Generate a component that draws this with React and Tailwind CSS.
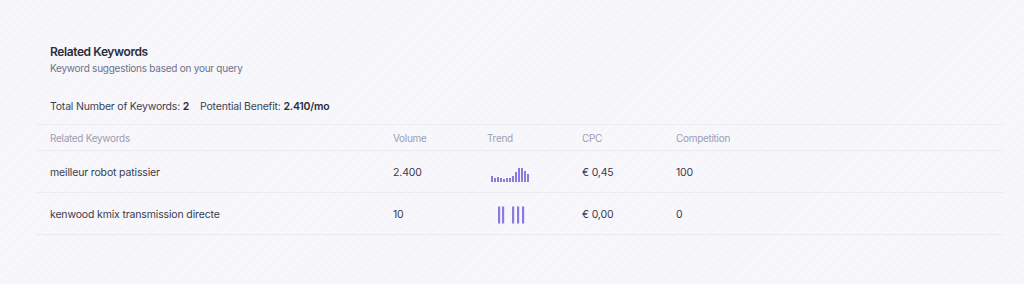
import React from "react";

const rows = [
  {
    kw: "meilleur robot patissier",
    volume: "2.400",
    cpc: "€ 0,45",
    comp: "100",
    trend: "a",
  },
  {
    kw: "kenwood kmix transmission directe",
    volume: "10",
    cpc: "€ 0,00",
    comp: "0",
    trend: "b",
  },
];

function TrendA() {
  const h = [6, 4, 5, 4, 3, 4, 4, 6, 10, 14, 14, 11, 8];
  return (
    <svg width="42" height="16" viewBox="0 0 42 16" className="block">
      {h.map((v, i) => (
        <rect key={i} x={i * 3} y={16 - v} width="2" height={v} fill="#8a7bdc" />
      ))}
    </svg>
  );
}

function TrendB() {
  const xs = [0, 4, 14, 19, 24];
  return (
    <svg width="28" height="18" viewBox="0 0 28 18" className="block">
      {xs.map((x, i) => (
        <rect key={i} x={x} y="0.5" width="2.2" height="17" fill="#8a7bdc" />
      ))}
    </svg>
  );
}

export default function App() {
  return (
    <div
      className="w-[1024px] h-[284px] bg-[repeating-linear-gradient(135deg,#f5f5fa_0px,#f5f5fa_3px,#f8f8fc_3px,#f8f8fc_6px)] pl-[36px] pr-[21px] pt-[43px]"
      style={{ fontFamily: "Inter, 'Noto Sans', sans-serif" }}
    >
      <div className="pl-[14px]">
        <h2 className="text-[12px] leading-[17px] font-semibold text-[#2b2d3c] tracking-[-0.4px]">
          Related Keywords
        </h2>
        <p className="text-[10px] leading-[16px] text-[#6e7187] tracking-[-0.25px]">
          Keyword suggestions based on your query
        </p>
        <div className="mt-[23px] text-[10.5px] leading-[16px] text-[#3d3f50] tracking-[-0.2px] flex gap-[11px]">
          <span>
            Total Number of Keywords: <span className="font-semibold text-[#2b2d3c]">2</span>
          </span>
          <span>
            Potential Benefit: <span className="font-semibold text-[#2b2d3c]">2.410/mo</span>
          </span>
        </div>
      </div>
      <div className="mt-[9px] border-t border-[#ebebf2]">
        <div className="flex items-center h-[26px] pt-[1px] border-b border-[#ebebf2] text-[10px] text-[#9c9eb3] tracking-[-0.3px]">
          <div className="w-[357px] pl-[14px]">Related Keywords</div>
          <div className="w-[94px]">Volume</div>
          <div className="w-[95px]">Trend</div>
          <div className="w-[94px]">CPC</div>
          <div>Competition</div>
        </div>
        {rows.map((r) => (
          <div
            key={r.kw}
            className="flex items-center h-[42px] pt-[2px] border-b border-[#ebebf2] text-[10.5px] text-[#393b4d] tracking-[-0.15px]"
          >
            <div className="w-[357px] pl-[14px]">{r.kw}</div>
            <div className="w-[94px]">{r.volume}</div>
            <div className="w-[95px]">
              {r.trend === "a" ? (
                <div className="pl-[4px] pt-[3px]">
                  <TrendA />
                </div>
              ) : (
                <div className="pl-[11px]">
                  <TrendB />
                </div>
              )}
            </div>
            <div className="w-[94px]">{r.cpc}</div>
            <div>{r.comp}</div>
          </div>
        ))}
      </div>
    </div>
  );
}
